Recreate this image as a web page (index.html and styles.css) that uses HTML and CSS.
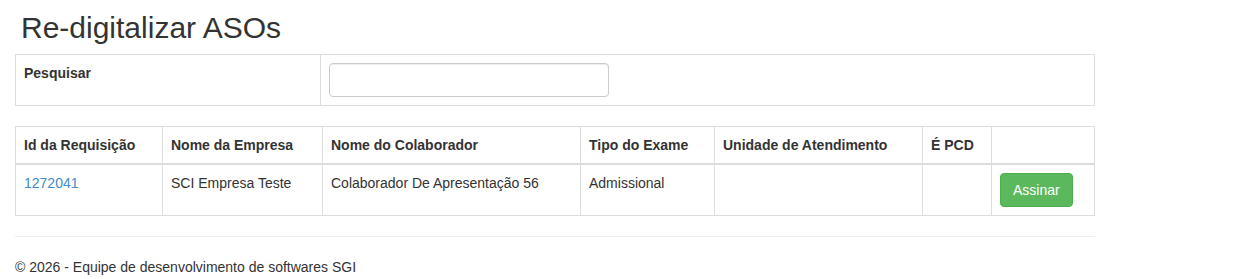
FILE: index.html
```html
<!DOCTYPE html>
<html lang="pt-BR">
<head>
<meta charset="utf-8">
<title>Re-digitalizar ASOs</title>
<link rel="stylesheet" href="styles.css">
</head>
<body>
<div class="container">
  <h2 class="title">Re-digitalizar ASOs</h2>
  <table class="table table-bordered search-table">
    <tr>
      <td class="search-label"><label>Pesquisar</label></td>
      <td><input type="text" class="form-control"></td>
    </tr>
  </table>
  <table class="table table-bordered data-table">
    <thead>
      <tr>
        <th class="c1">Id da Requisição</th>
        <th class="c2">Nome da Empresa</th>
        <th class="c3">Nome do Colaborador</th>
        <th class="c4">Tipo do Exame</th>
        <th class="c5">Unidade de Atendimento</th>
        <th class="c6">É PCD</th>
        <th class="c7"></th>
      </tr>
    </thead>
    <tbody>
      <tr>
        <td><a href="#">1272041</a></td>
        <td>SCI Empresa Teste</td>
        <td>Colaborador De Apresentação 56</td>
        <td>Admissional</td>
        <td></td>
        <td></td>
        <td><button class="btn btn-success">Assinar</button></td>
      </tr>
    </tbody>
  </table>
  <hr>
  <footer>
    <p>© 2026 - Equipe de desenvolvimento de softwares SGI</p>
  </footer>
</div>
</body>
</html>
```
FILE: styles.css
```css
* { box-sizing: border-box; }
html, body { margin: 0; padding: 0; }
body {
  font-family: "Liberation Sans", Arial, Helvetica, sans-serif;
  font-size: 14px;
  line-height: 1.428571429;
  color: #333;
  background: #fff;
}
.container {
  width: 1080px;
  margin-left: 15px;
}
.title {
  font-size: 30px;
  font-weight: 500;
  line-height: 1.1;
  margin: 11px 0 10px 6px;
}
.table {
  width: 100%;
  border-collapse: collapse;
  border-spacing: 0;
  margin-bottom: 20px;
}
.table-bordered { border: 1px solid #ddd; }
.table-bordered td, .table-bordered th {
  border: 1px solid #ddd;
  padding: 8px;
  line-height: 1.428571429;
  vertical-align: top;
  text-align: left;
}
.table-bordered thead th {
  border-bottom-width: 2px;
  vertical-align: bottom;
  font-weight: bold;
}
.search-label { width: 305px; }
label { font-weight: bold; display: inline-block; }
.form-control {
  display: block;
  width: 280px;
  height: 34px;
  padding: 6px 12px;
  font-size: 14px;
  font-family: inherit;
  color: #555;
  background: #fff;
  border: 1px solid #ccc;
  border-radius: 4px;
  box-shadow: inset 0 1px 1px rgba(0,0,0,.075);
  margin: 0;
}
.c1 { width: 147px; }
.c2 { width: 160px; }
.c3 { width: 258px; }
.c4 { width: 134px; }
.c5 { width: 208px; }
.c6 { width: 69px; }
a { color: #428bca; text-decoration: none; }
.btn {
  display: inline-block;
  padding: 6px 12px;
  font-size: 14px;
  font-family: inherit;
  line-height: 1.428571429;
  border: 1px solid transparent;
  border-radius: 4px;
  cursor: pointer;
  margin: 0;
}
.btn-success {
  color: #fff;
  background-color: #5cb85c;
  border-color: #4cae4c;
}
hr {
  margin: 20px 0;
  border: 0;
  border-top: 1px solid #eee;
  height: 0;
}
footer p { margin: 0 0 10px; }
```
